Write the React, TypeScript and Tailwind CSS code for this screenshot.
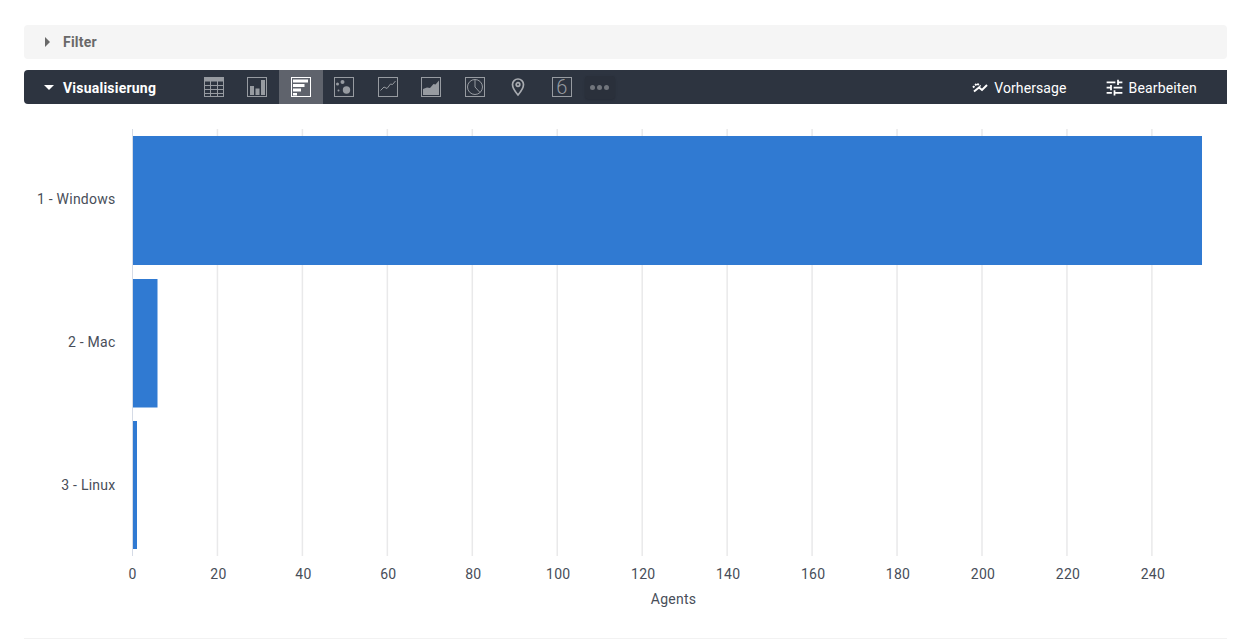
const ticks = [0, 20, 40, 60, 80, 100, 120, 140, 160, 180, 200, 220, 240];

const bars = [
  { label: "1 - Windows", y: 136, height: 129, width: 1069, labelY: 199 },
  { label: "2 - Mac", y: 279, height: 128.5, width: 24.5, labelY: 342 },
  { label: "3 - Linux", y: 421, height: 128, width: 4, labelY: 485 },
];

function ChartIcon({ children }: { children: React.ReactNode }) {
  return (
    <svg width="20" height="20" viewBox="0 0 20 20" fill="none">
      {children}
    </svg>
  );
}

const frame = <rect x="0.5" y="0.5" width="19" height="19" stroke="currentColor" />;

const icons = [
  <ChartIcon key="table">
    <rect x="0.5" y="0.5" width="19" height="19" stroke="currentColor" />
    <rect x="0" y="0" width="20" height="4.5" fill="currentColor" />
    <path d="M0.5 8.5h19M0.5 12.5h19M0.5 16.5h19M6.5 4v16M13.5 4v16" stroke="currentColor" />
  </ChartIcon>,
  <ChartIcon key="bar">
    {frame}
    <path d="M3 9h4v9H3zM8.5 11.500h4V18h-4zM14 3h4v15h-4z" fill="currentColor" />
  </ChartIcon>,
  <ChartIcon key="hbar">
    <rect x="0.5" y="0.5" width="19" height="19" stroke="#ffffff" />
    <path d="M2 2.5h15v3H2zM2 7h11.5v3H2zM2 11.5h8v3H2zM2 16h4v2.5H2z" fill="#ffffff" />
  </ChartIcon>,
  <ChartIcon key="scatter">
    {frame}
    <circle cx="3.500" cy="7" r="1.500" fill="currentColor" />
    <circle cx="8.500" cy="5" r="2" fill="currentColor" />
    <circle cx="4.500" cy="13.500" r="1" fill="currentColor" />
    <circle cx="12.500" cy="13" r="3.700" fill="currentColor" />
  </ChartIcon>,
  <ChartIcon key="line">
    {frame}
    <path d="M2.500 13.500 6 10l3 1.500 3.500-4.500 2 .5L17.500 4" stroke="currentColor" />
  </ChartIcon>,
  <ChartIcon key="area">
    {frame}
    <path d="M2 18v-6l4-1.500 3 .5 3.500-4 2 .5L18 3.500V18z" fill="currentColor" />
  </ChartIcon>,
  <ChartIcon key="pie">
    {frame}
    <circle cx="10" cy="10" r="7.500" stroke="currentColor" />
    <path d="M10 2.500V10l5 5.500" stroke="currentColor" />
  </ChartIcon>,
  <ChartIcon key="map">
    <path
      d="M10 18C7 14.500 4.500 11.500 4.500 7.500a5.500 5.500 0 0 1 11 0c0 4-2.500 7-5.500 10.500z"
      stroke="#a9acb1"
      strokeWidth="1.700"
    />
    <circle cx="10" cy="7.500" r="1.800" stroke="#a9acb1" strokeWidth="1.700" />
  </ChartIcon>,
];

function Toolbar() {
  return (
    <div className="mt-[11px] flex h-[34px] items-center rounded-l-[4px] bg-[#2d3440] text-white">
      <div className="flex w-[168px] items-center pl-5">
        <span className="h-0 w-0 border-x-[5px] border-t-[5px] border-x-transparent border-t-white" />
        <span className="ml-[9px] pt-[2px] text-sm font-bold tracking-[0.22px]">Visualisierung</span>
      </div>
      <div className="flex h-full items-center text-[#979ba1]">
        {icons.map((icon, index) => (
          <div
            key={index}
            className={`flex h-full w-[43.5px] items-center justify-center ${
              index === 2 ? "bg-[#5f636c]" : ""
            }`}
          >
            {icon}
          </div>
        ))}
        <div className="flex h-full w-[43.5px] items-center justify-center">
          <span className="flex h-5 w-5 items-center justify-center border border-[#979ba1] text-[20px] leading-none font-light">
            6
          </span>
        </div>
        <div className="ml-[1px] flex h-[23px] w-[30px] items-center justify-center gap-[2px] rounded-[3px] bg-[#2a303b] shadow-sm">
          <span className="h-[5px] w-[5px] rounded-full bg-[#71757c]" />
          <span className="h-[5px] w-[5px] rounded-full bg-[#71757c]" />
          <span className="h-[5px] w-[5px] rounded-full bg-[#71757c]" />
        </div>
      </div>
      <div className="ml-auto flex items-center pr-[30px] text-sm">
        <svg width="16" height="16" viewBox="0 0 16 16" fill="none" stroke="#ffffff" strokeWidth="2">
          <path d="M1 8.500 5 4.500l3.500 3" strokeDasharray="2 1" />
          <path d="M2 12.500 7 8.500l3 2.500 5-5" />
        </svg>
        <span className="ml-[6px] pt-[2px] tracking-[0.1px]">Vorhersage</span>
        <svg className="ml-[37px]" width="21" height="21" viewBox="0 0 24 24" fill="#ffffff">
          <path d="M3 17v2h6v-2H3zM3 5v2h10V5H3zm10 16v-2h8v-2h-8v-2h-2v6h2zM7 9v2H3v2h4v2h2V9H7zm14 4v-2H11v2h10zm-6-4h2V7h4V5h-4V3h-2v6z" />
        </svg>
        <span className="ml-[4px] pt-[2px] tracking-[0.15px]">Bearbeiten</span>
      </div>
    </div>
  );
}

function Chart() {
  return (
    <svg
      className="block"
      width="1203"
      height="534"
      viewBox="24 104 1203 534"
      style={{ fontFamily: "Roboto, sans-serif", letterSpacing: "0.25px" }}
    >
      {ticks.map((tick) => {
        const x = 132.5 + tick * 4.2475;
        return (
          <g key={tick}>
            <line
              x1={x}
              x2={x}
              y1={129}
              y2={556}
              stroke={tick === 0 ? "#d5dbe6" : "#e9e9ea"}
              strokeWidth={tick === 0 ? 1 : 1.5}
            />
            <text x={tick === 0 ? x : x + 1} y={579} textAnchor="middle" fontSize="14" fill="#484e59">
              {tick}
            </text>
          </g>
        );
      })}
      {bars.map((bar) => (
        <g key={bar.label}>
          <rect x={133} y={bar.y} width={bar.width} height={bar.height} fill="#307ad2" />
          <text x={115.5} y={bar.labelY + 5} textAnchor="end" fontSize="14" fill="#484e59">
            {bar.label}
          </text>
        </g>
      ))}
      <text x={673.5} y={604} textAnchor="middle" fontSize="14" fill="#484e59">
        Agents
      </text>
    </svg>
  );
}

export default function App() {
  return (
    <div className="h-[639px] overflow-hidden bg-white pt-[25px] pr-[21px] pl-6 font-['Roboto',sans-serif]">
      <div className="flex h-[34px] items-center rounded-[4px] bg-[#f5f5f5] pl-[21px] text-[#696969]">
        <span className="h-0 w-0 border-y-[5px] border-l-[5px] border-y-transparent border-l-[#696969]" />
        <span className="ml-[13px] text-sm font-bold tracking-[0.2px]">Filter</span>
      </div>
      <Toolbar />
      <Chart />
      <div className="h-px bg-[#f2f2f2]" />
    </div>
  );
}
